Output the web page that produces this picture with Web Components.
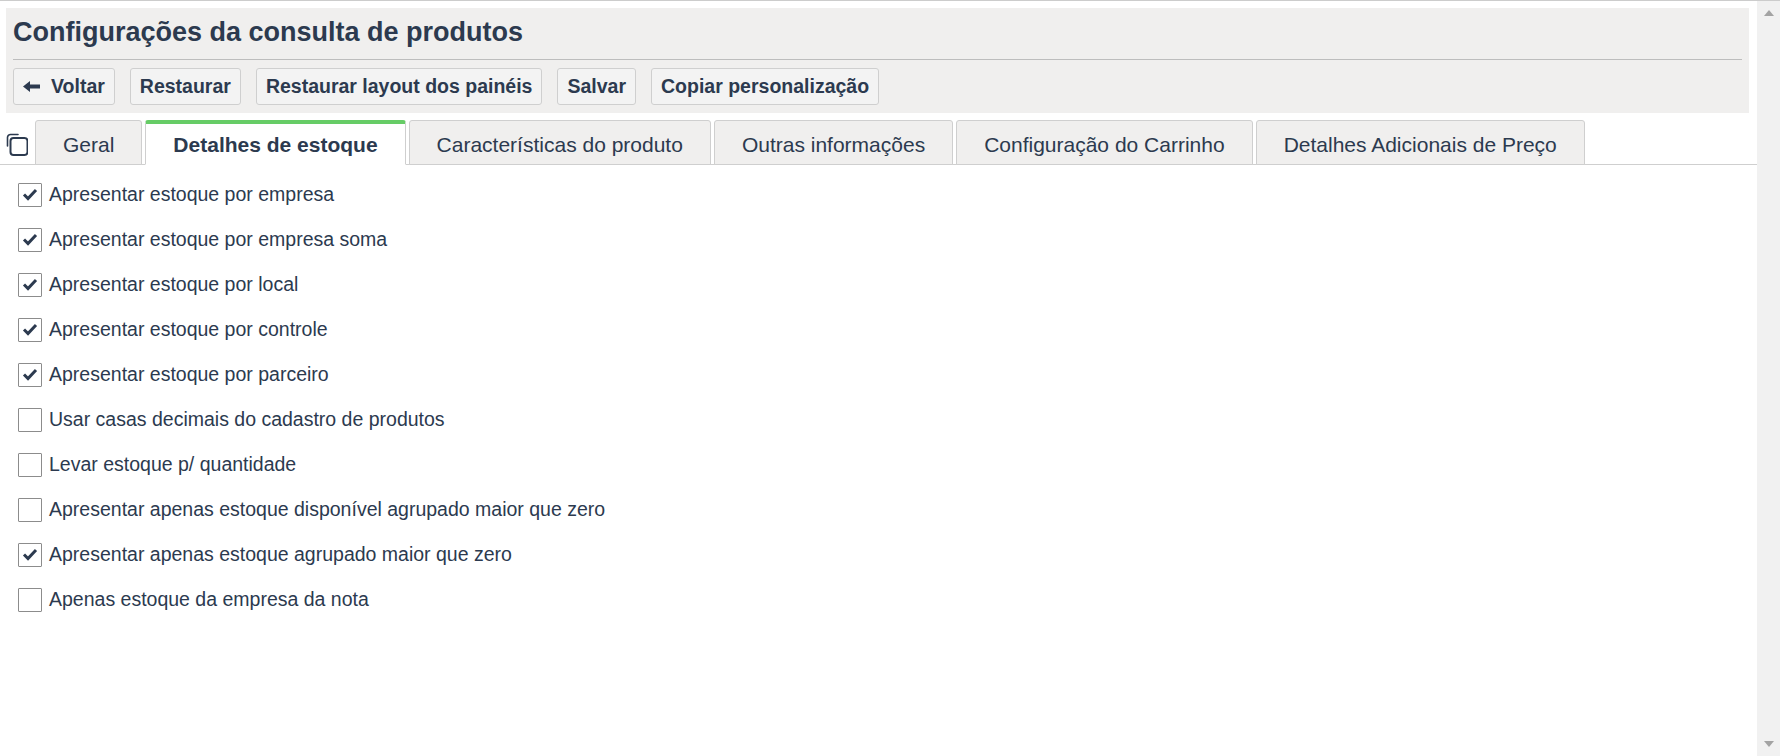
<!DOCTYPE html>
<html lang="pt">
<head>
<meta charset="utf-8">
<title>Configurações da consulta de produtos</title>
<style>
  html,body{ margin:0; height:100%; overflow:hidden; background:#fff; }
  body{ font-family:"Liberation Sans",Arial,sans-serif; color:#2c3a4f; }
</style>
</head>
<body>

<config-page>
  <page-header slot="header" heading="Configurações da consulta de produtos">
    <tool-button icon="back">Voltar</tool-button>
    <tool-button>Restaurar</tool-button>
    <tool-button>Restaurar layout dos painéis</tool-button>
    <tool-button>Salvar</tool-button>
    <tool-button>Copiar personalização</tool-button>
  </page-header>

  <tab-bar slot="tabs">
    <tab-item>Geral</tab-item>
    <tab-item active>Detalhes de estoque</tab-item>
    <tab-item>Características do produto</tab-item>
    <tab-item>Outras informações</tab-item>
    <tab-item>Configuração do Carrinho</tab-item>
    <tab-item>Detalhes Adicionais de Preço</tab-item>
  </tab-bar>

  <check-row checked>Apresentar estoque por empresa</check-row>
  <check-row checked>Apresentar estoque por empresa soma</check-row>
  <check-row checked>Apresentar estoque por local</check-row>
  <check-row checked>Apresentar estoque por controle</check-row>
  <check-row checked>Apresentar estoque por parceiro</check-row>
  <check-row>Usar casas decimais do cadastro de produtos</check-row>
  <check-row>Levar estoque p/ quantidade</check-row>
  <check-row>Apresentar apenas estoque disponível agrupado maior que zero</check-row>
  <check-row checked>Apresentar apenas estoque agrupado maior que zero</check-row>
  <check-row>Apenas estoque da empresa da nota</check-row>
</config-page>

<script>
class ConfigPage extends HTMLElement {
  constructor(){
    super();
    this.attachShadow({ mode:"open" });
    this.shadowRoot.innerHTML = `
      <style>
        :host{
          display:grid;
          grid-template-columns:1fr 23px;
          height:756px;
          box-sizing:border-box;
          border-top:1px solid #ccc;
        }
        .main{
          min-width:0;
          padding-top:7px;
        }
        .list{
          display:flex;
          flex-direction:column;
          padding:7px 0 0 18px;
        }
        .scroll{
          background:#f1f1f1;
          display:flex;
          flex-direction:column;
          justify-content:space-between;
          align-items:center;
          padding:9px 0 9px;
        }
        .up,.down{
          width:0;
          height:0;
          border-left:5.5px solid transparent;
          border-right:5.5px solid transparent;
        }
        .up{ border-bottom:6px solid #a3a3a3; }
        .down{ border-top:6px solid #a3a3a3; }
      </style>
      <div class="main">
        <slot name="header"></slot>
        <slot name="tabs"></slot>
        <div class="list"><slot></slot></div>
      </div>
      <div class="scroll"><span class="up"></span><span class="down"></span></div>
    `;
  }
}

class PageHeader extends HTMLElement {
  constructor(){
    super();
    this.attachShadow({ mode:"open" });
    this.shadowRoot.innerHTML = `
      <style>
        :host{
          display:block;
          margin:0 8px 0 6px;
          padding:0 7px;
          height:105px;
          box-sizing:border-box;
          background:#f0efee;
        }
        h1{
          margin:0;
          height:51px;
          line-height:48px;
          font-size:27px;
          font-weight:bold;
          color:#2c3a4f;
          border-bottom:1px solid #bdbdbd;
        }
        .tools{
          display:flex;
          gap:15px;
          padding-top:8px;
        }
      </style>
      <h1></h1>
      <div class="tools"><slot></slot></div>
    `;
    this.shadowRoot.querySelector("h1").textContent = this.getAttribute("heading");
  }
}

class ToolButton extends HTMLElement {
  constructor(){
    super();
    this.attachShadow({ mode:"open" });
    const icon = this.getAttribute("icon") === "back"
      ? `<svg width="17" height="13" viewBox="0 0 17 13"><path d="M0 6.5 7 1v3.5h10v4H7V12z" fill="#2c3a4f"/></svg>`
      : "";
    this.shadowRoot.innerHTML = `
      <style>
        :host{
          display:inline-flex;
          align-items:center;
          gap:11px;
          height:37px;
          padding:0 9px;
          box-sizing:border-box;
          background:#f3f3f3;
          border:1px solid #cfcfcf;
          border-radius:3px;
          font-size:19.5px;
          font-weight:bold;
          color:#2c3a4f;
        }
      </style>
      ${icon}<slot></slot>
    `;
  }
}

class TabBar extends HTMLElement {
  constructor(){
    super();
    this.attachShadow({ mode:"open" });
    this.shadowRoot.innerHTML = `
      <style>
        :host{
          display:flex;
          align-items:flex-end;
          gap:3px;
          height:45px;
          margin-top:7px;
          box-sizing:border-box;
          border-bottom:1px solid #cfcfcf;
          padding-left:5px;
        }
        .copy{
          width:23px;
          height:28px;
          margin-right:4px;
          align-self:flex-start;
          margin-top:12px;
        }
      </style>
      <svg class="copy" viewBox="0 0 23 28">
        <path d="M2.5 14V5.5a3 3 0 0 1 3-3H13" fill="none" stroke="#2c3a4f" stroke-width="1.6" stroke-linecap="round"/>
        <rect x="5.5" y="6" width="17" height="17" rx="3" fill="none" stroke="#2c3a4f" stroke-width="2"/>
      </svg>
      <slot></slot>
    `;
  }
}

class TabItem extends HTMLElement {
  constructor(){
    super();
    this.attachShadow({ mode:"open" });
    this.shadowRoot.innerHTML = `
      <style>
        :host{
          display:flex;
          align-items:center;
          height:45px;
          padding:4px 27px 0;
          margin-bottom:-1px;
          box-sizing:border-box;
          background:#f0efee;
          border:1px solid #cfcfcf;
          border-radius:3px 3px 0 0;
          font-size:21px;
          color:#2c3a4f;
        }
        :host([active]){
          background:#fff;
          border-top:4px solid #66cc66;
          border-bottom-color:#fff;
          font-weight:bold;
          padding-top:1px;
        }
      </style>
      <slot></slot>
    `;
  }
}

class CheckRow extends HTMLElement {
  constructor(){
    super();
    this.attachShadow({ mode:"open" });
    const tick = this.hasAttribute("checked")
      ? `<svg width="16" height="13" viewBox="0 0 16 13"><path d="M2 6.5 6 10.5 14 2" fill="none" stroke="#2c3a4f" stroke-width="3"/></svg>`
      : "";
    this.shadowRoot.innerHTML = `
      <style>
        :host{
          display:flex;
          align-items:center;
          gap:7px;
          height:45px;
          font-size:19.5px;
          color:#2c3a4f;
        }
        .box{
          width:24px;
          height:24px;
          box-sizing:border-box;
          background:#fff;
          border:1px solid #8c8c8c;
          border-radius:1px;
          display:grid;
          place-items:center;
        }
      </style>
      <span class="box">${tick}</span>
      <span><slot></slot></span>
    `;
  }
}

customElements.define("config-page", ConfigPage);
customElements.define("page-header", PageHeader);
customElements.define("tool-button", ToolButton);
customElements.define("tab-bar", TabBar);
customElements.define("tab-item", TabItem);
customElements.define("check-row", CheckRow);
</script>
</body>
</html>
